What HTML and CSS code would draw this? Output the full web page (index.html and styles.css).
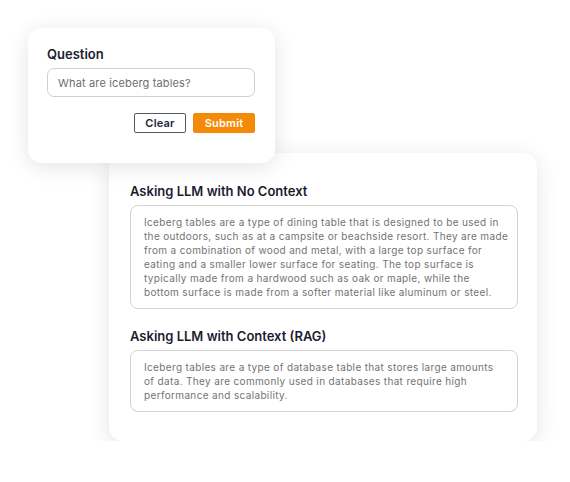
FILE: index.html
```html
<!DOCTYPE html>
<html lang="en">
  <head>
    <meta charset="UTF-8" />
    <meta name="viewport" content="width=device-width, initial-scale=1.0" />
    <title>Iceberg tables - RAG demo</title>
    <link rel="stylesheet" href="styles.css">
  </head>
  <body>
    <main class="scene">
      <section class="card ask">
        <h2 class="label">Question</h2>
        <input class="field" type="text" placeholder="What are iceberg tables?" />
        <div class="actions">
          <button class="btn btn-clear">Clear</button>
          <button class="btn btn-submit">Submit</button>
        </div>
      </section>

      <section class="card answers">
        <h3 class="label">Asking LLM with No Context</h3>
        <div class="answer">
          Iceberg tables are a type of dining table that is designed to be used in<br>
          the outdoors, such as at a campsite or beachside resort. They are made<br>
          from a combination of wood and metal, with a large top surface for<br>
          eating and a smaller lower surface for seating. The top surface is<br>
          typically made from a hardwood such as oak or maple, while the<br>
          bottom surface is made from a softer material like aluminum or steel.
        </div>

        <h3 class="label label-gap">Asking LLM with Context (RAG)</h3>
        <div class="answer">
          Iceberg tables are a type of database table that stores large amounts<br>
          of data. They are commonly used in databases that require high<br>
          performance and scalability.
        </div>
      </section>
    </main>
  </body>
</html>
```

FILE: styles.css
```css
body {
  margin: 0;
  padding: 0;
  background-color: #ffffff;
  font-family: Inter, "Noto Sans", sans-serif;
  color: #1c1c30;
}

.scene {
  padding: 28px 0 0 28px;
}

.card {
  background-color: #ffffff;
  border-radius: 14px;
  box-shadow: 0 4px 22px rgba(0, 0, 0, 0.11);
  box-sizing: border-box;
}

.ask {
  position: relative;
  z-index: 2;
  width: 247px;
  height: 135px;
  padding: 18px 20px 0 19px;
}

.label {
  margin: 0;
  font-size: 13px;
  line-height: 16px;
  font-weight: 600;
  color: #1c1c30;
}

.field {
  display: block;
  width: 100%;
  height: 29px;
  margin-top: 6px;
  box-sizing: border-box;
  border: 1px solid #cfcfcf;
  border-radius: 7px;
  padding: 0 10px;
  font-family: inherit;
  font-size: 11px;
  letter-spacing: 0.15px;
  color: #333;
}

.field::placeholder {
  color: #6e6e6e;
}

.actions {
  display: flex;
  justify-content: flex-end;
  gap: 7px;
  margin-top: 16px;
}

.btn {
  height: 20px;
  padding: 0;
  border-radius: 2px;
  font-family: inherit;
  font-size: 11px;
  font-weight: 600;
  letter-spacing: 0.2px;
  cursor: pointer;
}

.btn-clear {
  width: 52px;
  background-color: #ffffff;
  border: 1px solid #555a60;
  color: #22223a;
}

.btn-submit {
  width: 62px;
  background-color: #f58a07;
  border: 1px solid #f58a07;
  color: #ffffff;
}

.answers {
  position: relative;
  z-index: 1;
  width: 428px;
  height: 288px;
  margin: -10px 0 0 81px;
  padding: 30px 19px 0 21px;
}

.label-gap {
  margin-top: 19px;
}

.answer {
  margin-top: 6px;
  border: 1px solid #d2d2d2;
  border-radius: 8px;
  padding: 9px 6px 9px 13px;
  font-size: 10px;
  line-height: 14px;
  letter-spacing: 0.35px;
  white-space: nowrap;
  overflow: hidden;
  color: #737373;
}
```
